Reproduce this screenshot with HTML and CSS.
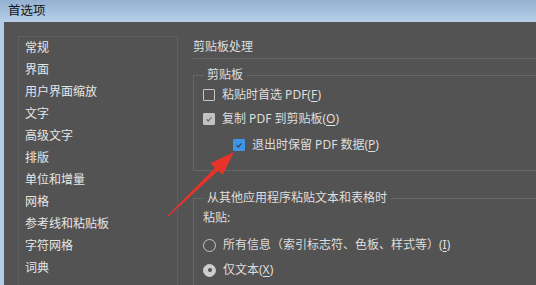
FILE: index.html
```html
<!DOCTYPE html>
<html lang="zh-CN">
<head>
	<meta charset="UTF-8">
	<title>首选项</title>
	<link rel="stylesheet" href="styles.css">
</head>
<body>
	<div class="titlebar">首选项</div>
	<div class="main">
		<ul class="nav">
			<li>常规</li>
			<li>界面</li>
			<li>用户界面缩放</li>
			<li>文字</li>
			<li>高级文字</li>
			<li>排版</li>
			<li>单位和增量</li>
			<li>网格</li>
			<li>参考线和粘贴板</li>
			<li>字符网格</li>
			<li>词典</li>
		</ul>
		<div class="content">
			<div class="heading">剪贴板处理</div>
			<fieldset class="group group-clip">
				<legend>剪贴板</legend>
				<div class="row">
					<span class="box"></span>
					<span>粘贴时首选 PDF(<u>F</u>)</span>
				</div>
				<div class="row">
					<span class="box grey">
						<svg width="12" height="12" viewBox="0 0 12 12"><path d="M3 6.2 L5.1 8.3 L9 4" fill="none" stroke="#707070" stroke-width="1.6"/></svg>
					</span>
					<span>复制 PDF 到剪贴板(<u>O</u>)</span>
				</div>
				<div class="row sub">
					<span class="box blue">
						<svg width="12" height="12" viewBox="0 0 12 12"><path d="M3 6.2 L5.1 8.3 L9 4" fill="none" stroke="#34475b" stroke-width="1.6"/></svg>
					</span>
					<span>退出时保留 PDF 数据(<u>P</u>)</span>
				</div>
			</fieldset>
			<fieldset class="group group-paste">
				<legend>从其他应用程序粘贴文本和表格时</legend>
				<div class="row">粘贴:</div>
				<div class="row radio-row">
					<span class="radio"></span>
					<span>所有信息（索引标志符、色板、样式等）(<u>I</u>)</span>
				</div>
				<div class="row">
					<span class="radio on"></span>
					<span>仅文本(<u>X</u>)</span>
				</div>
			</fieldset>
		</div>
	</div>
	<svg class="arrow" width="536" height="285" viewBox="0 0 536 285">
		<polygon points="167.6,215.8 214.8,167.9 210.6,163.3 234,152 222.8,174.8 218.4,170.6 168.4,216.6" fill="#e8332b"/>
	</svg>
</body>
</html>
```
FILE: styles.css
```css
*{
	margin: 0;
	padding: 0;
	box-sizing: border-box;
}
body{
	width: 536px;
	height: 285px;
	overflow: hidden;
	background-color: #535353;
	font-family: "Noto Sans", "Noto Sans CJK SC", sans-serif;
	font-size: 12px;
	color: #dedede;
	position: relative;
}
.titlebar{
	height: 22px;
	line-height: 21px;
	padding-left: 8px;
	color: #151515;
	font-size: 12.5px;
	background: linear-gradient(#93b1d1, #b7cfe8);
}
.main{
	display: flex;
	height: 263px;
	overflow: hidden;
	border-left: 4px solid #b4cde6;
	padding: 14px 0 0 14px;
}
.nav{
	list-style: none;
	width: 160px;
	flex: none;
	border: 1px solid #5f5f5f;
	border-bottom: none;
}
.nav>li{
	height: 22px;
	line-height: 22px;
	padding-left: 6px;
	color: #e6e6e6;
}
.content{
	flex: 1;
	min-width: 0;
	margin-left: 15px;
	margin-right: -30px;
}
.heading{
	height: 23px;
	line-height: 22px;
	border-bottom: 1px solid #656565;
}
.group{
	border: 1px solid #676767;
	padding: 0 0 0 9px;
}
.group>legend{
	margin-left: 0;
	padding: 0 4px;
	height: 16px;
	line-height: 16px;
}
.group-clip{
	margin-top: 8px;
	padding-bottom: 13px;
}
.group-paste{
	margin-top: 19px;
	height: 120px;
}
.row{
	display: flex;
	align-items: center;
	height: 24px;
	line-height: 16px;
}
.row.sub{
	margin-top: 2px;
	padding-left: 30px;
}
.radio-row{
	margin-top: 3px;
	margin-bottom: 1px;
}
.box{
	width: 12px;
	height: 12px;
	border: 1px solid #c6c6c6;
	border-radius: 1px;
	margin-right: 7px;
	display: flex;
	align-items: center;
	justify-content: center;
	flex: none;
}
.box>svg{
	display: block;
}
.box.grey{
	background-color: #c2c2c2;
	border-color: #c2c2c2;
}
.box.blue{
	background-color: #3d95e8;
	border-color: #3d95e8;
}
.radio{
	width: 13px;
	height: 13px;
	border: 1px solid #c6c6c6;
	border-radius: 50%;
	margin-right: 7px;
	flex: none;
	position: relative;
}
.radio.on{
	background-color: #cdcdcd;
	border-color: #cdcdcd;
}
.radio.on::after{
	content: "";
	position: absolute;
	left: 3.5px;
	top: 3.5px;
	width: 4px;
	height: 4px;
	border-radius: 50%;
	background-color: #505050;
}
u{
	text-decoration-thickness: 1px;
	text-underline-offset: 2px;
}
.arrow{
	position: absolute;
	left: 0;
	top: 0;
	pointer-events: none;
}
```
